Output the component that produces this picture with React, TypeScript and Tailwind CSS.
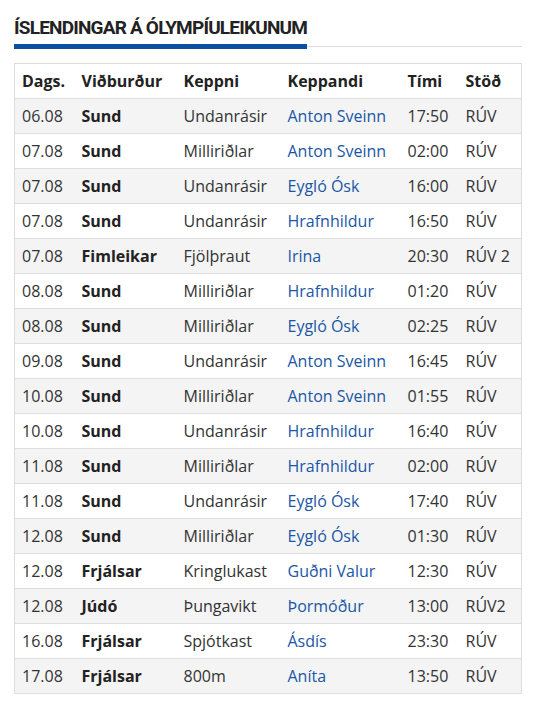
import React from "react";

const rows = [
  ["06.08", "Sund", "Undanrásir", "Anton Sveinn", "17:50", "RÚV"],
  ["07.08", "Sund", "Milliriðlar", "Anton Sveinn", "02:00", "RÚV"],
  ["07.08", "Sund", "Undanrásir", "Eygló Ósk", "16:00", "RÚV"],
  ["07.08", "Sund", "Undanrásir", "Hrafnhildur", "16:50", "RÚV"],
  ["07.08", "Fimleikar", "Fjölþraut", "Irina", "20:30", "RÚV 2"],
  ["08.08", "Sund", "Milliriðlar", "Hrafnhildur", "01:20", "RÚV"],
  ["08.08", "Sund", "Milliriðlar", "Eygló Ósk", "02:25", "RÚV"],
  ["09.08", "Sund", "Undanrásir", "Anton Sveinn", "16:45", "RÚV"],
  ["10.08", "Sund", "Milliriðlar", "Anton Sveinn", "01:55", "RÚV"],
  ["10.08", "Sund", "Undanrásir", "Hrafnhildur", "16:40", "RÚV"],
  ["11.08", "Sund", "Milliriðlar", "Hrafnhildur", "02:00", "RÚV"],
  ["11.08", "Sund", "Undanrásir", "Eygló Ósk", "17:40", "RÚV"],
  ["12.08", "Sund", "Milliriðlar", "Eygló Ósk", "01:30", "RÚV"],
  ["12.08", "Frjálsar", "Kringlukast", "Guðni Valur", "12:30", "RÚV"],
  ["12.08", "Júdó", "Þungavikt", "Þormóður", "13:00", "RÚV2"],
  ["16.08", "Frjálsar", "Spjótkast", "Ásdís", "23:30", "RÚV"],
  ["17.08", "Frjálsar", "800m", "Aníta", "13:50", "RÚV"],
];

export default function App() {
  return (
    <div className="w-[536px] h-[711px] bg-white px-[14px] pt-[17px] font-['Open_Sans',sans-serif] text-[#333]">
      {/* Heading */}
      <div className="flex items-end">
        <h2 className="border-b-[5px] border-[#0a4fa0] pb-[5px] font-['Roboto',sans-serif] text-[19px] font-bold leading-[22px] tracking-[-0.8px] text-[#222] uppercase whitespace-nowrap">
          Íslendingar á Ólympíuleikunum
        </h2>
        <div className="flex-1 border-b border-[#ddd] mb-[2px]"></div>
      </div>

      {/* Table */}
      <table className="mt-[14px] w-[508px] table-fixed border-collapse border border-[#ddd] text-[16px]">
        <colgroup>
          <col className="w-[60px]" />
          <col className="w-[102px]" />
          <col className="w-[104px]" />
          <col className="w-[120px]" />
          <col className="w-[58px]" />
          <col />
        </colgroup>
        <thead>
          <tr className="h-[35px] bg-white">
            {["Dags.", "Viðburður", "Keppni", "Keppandi", "Tími", "Stöð"].map((h) => (
              <th key={h} className="pl-[7px] text-left font-bold text-[#222] whitespace-nowrap">
                {h}
              </th>
            ))}
          </tr>
        </thead>
        <tbody>
          {rows.map((r, i) => (
            <tr key={i} className={`h-[35px] border-t border-[#ddd] ${i % 2 === 0 ? "bg-[#f4f4f4]" : "bg-white"}`}>
              <td className="pl-[7px] whitespace-nowrap">{r[0]}</td>
              <td className="pl-[7px] font-bold text-[#222] whitespace-nowrap">{r[1]}</td>
              <td className="pl-[7px] whitespace-nowrap">{r[2]}</td>
              <td className="pl-[7px] text-[#1a56a6] whitespace-nowrap">{r[3]}</td>
              <td className="pl-[7px] whitespace-nowrap">{r[4]}</td>
              <td className="pl-[7px] whitespace-nowrap">{r[5]}</td>
            </tr>
          ))}
        </tbody>
      </table>
    </div>
  );
}
